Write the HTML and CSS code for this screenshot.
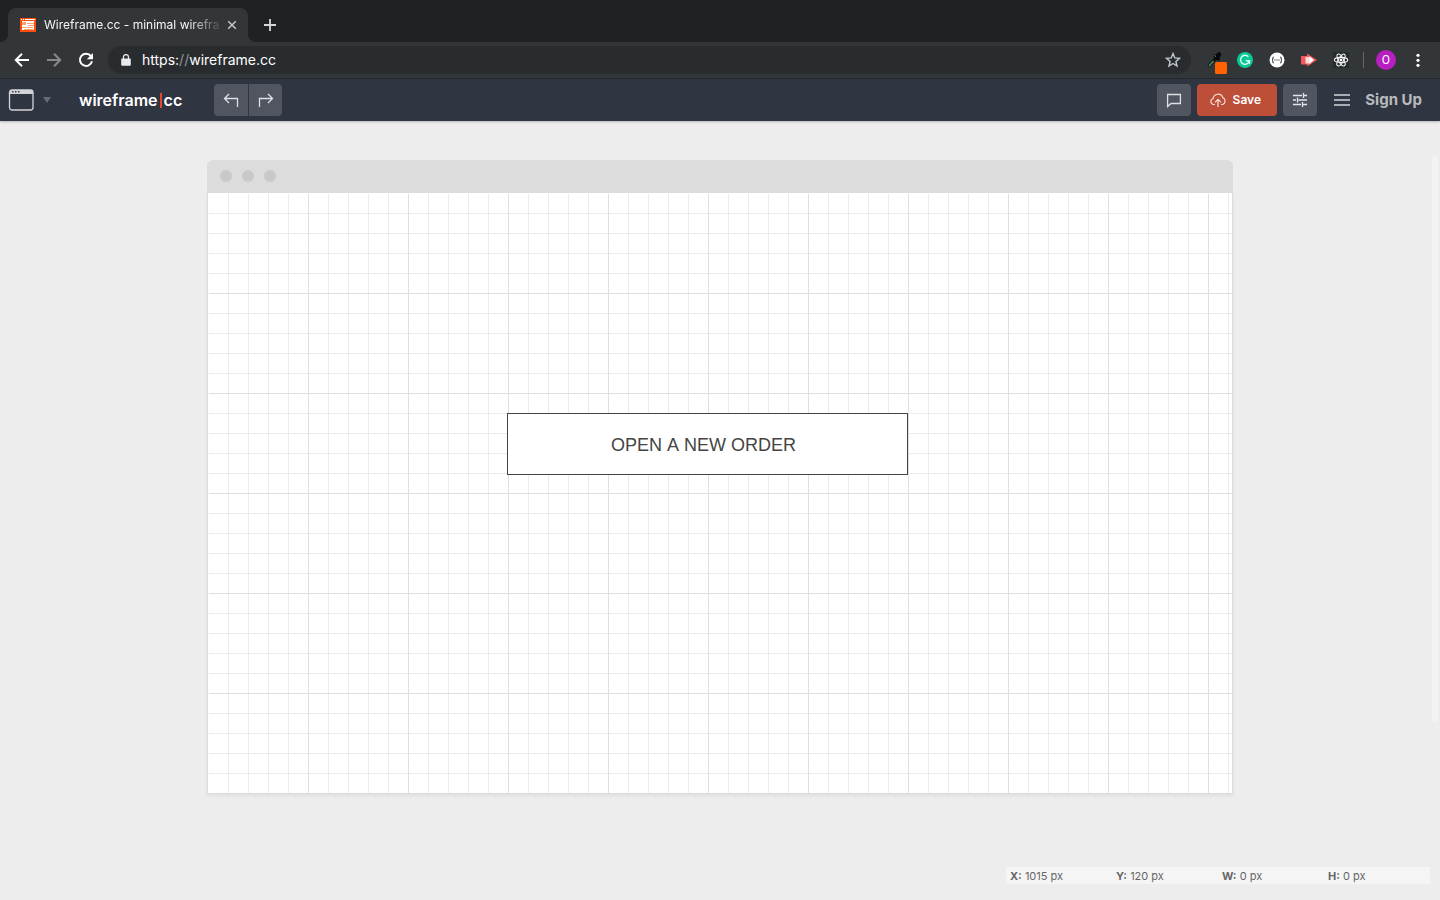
FILE: index.html
```html
<!DOCTYPE html>
<html lang="en">
<head>
<meta charset="utf-8">
<title>Wireframe.cc - minimal wireframing tool</title>
<link rel="stylesheet" href="styles.css">
</head>
<body>
<div class="tab-strip">
  <div class="tab">
    <svg class="favicon" width="16" height="14" viewBox="0 0 16 14"><path fill="#ff4d0c" d="M0 0h16v14H0z"/><path fill="#fff" d="M1 1h1v1H1zM3 1h1v1H3zM5 1h10v1H5zM2 3h12v9H2z"/><path fill="#ffa06f" d="M2 4h4v3H2zM7 5h7v1H7zM8 7h6v1H8zM2 9h4v1H2zM7 9h6v1H7zM4 11h9v1H4z"/></svg>
    <span class="tab-title">Wireframe.cc - minimal wirefra</span>
    <button class="plain tab-close" aria-label="Close tab"><svg width="10" height="10" viewBox="0 0 10 10"><path d="M1.200 1.200l7.600 7.600M8.800 1.200l-7.600 7.600" fill="none" stroke="#c5c8ca" stroke-width="1.500"/></svg></button>
  </div>
  <button class="plain new-tab" aria-label="New tab"><svg width="12" height="12" viewBox="0 0 12 12"><path d="M6 0v12M0 6h12" stroke="#d5d6d8" stroke-width="1.800"/></svg></button>
</div>

<div class="browser-bar">
  <div class="nav">
    <button class="plain" aria-label="Back"><svg width="16" height="16" viewBox="0 0 16 16"><path d="M15 8H2.200M8 1.800L1.800 8 8 14.200" fill="none" stroke="#fff" stroke-width="2"/></svg></button>
    <button class="plain" aria-label="Forward"><svg width="16" height="16" viewBox="0 0 16 16"><path d="M1 8h12.800M8 1.800L14.200 8 8 14.200" fill="none" stroke="#85898b" stroke-width="2"/></svg></button>
    <button class="plain" aria-label="Reload"><svg width="16" height="16" viewBox="0 0 16 16"><path d="M13 4.200A6.100 6.100 0 1 0 14 9.200" fill="none" stroke="#fff" stroke-width="2"/><path d="M15 1v6.200H8.800z" fill="#fff"/></svg></button>
  </div>
  <div class="address">
    <svg width="10" height="12" viewBox="0 0 10 12"><path d="M1 4.500h8a.8.8 0 0 1 .8.800v5.400a1 1 0 0 1-1 1H1.200a1 1 0 0 1-1-1V5.300a.8.8 0 0 1 .8-.8z" fill="#e8eaed"/><path d="M2.500 5V3.100a2.500 2.500 0 0 1 5 0V5" fill="none" stroke="#e8eaed" stroke-width="1.300"/></svg>
    <a class="url" href="#">https:<span class="dim">//</span>wireframe.cc</a>
    <button class="plain" aria-label="Bookmark"><svg width="16" height="16" viewBox="0 0 16 16"><path d="M8 1.600l1.800 4.300 4.700.4-3.600 3.100 1.100 4.600L8 11.500 4 14l1.100-4.600-3.600-3.100 4.700-.4z" fill="none" stroke="#c4c8cc" stroke-width="1.400"/></svg></button>
  </div>
  <div class="extensions">
    <button class="plain" aria-label="Color picker"><svg width="20" height="28" viewBox="0 0 20 28"><path d="M1.500 20.500L9 12" stroke="#0a130d" stroke-width="3"/><path d="M2 20l4.500-5" stroke="#4fa271" stroke-width="1.200"/><path d="M7 9l5.500 5" stroke="#08090a" stroke-width="2.400"/><path d="M9.500 11.500l2.500-3" stroke="#08090a" stroke-width="4.500" stroke-linecap="round"/><path d="M7.500 9.500l1.500 1" stroke="#999" stroke-width="1"/><rect x="8" y="16" width="12" height="12" rx="1.500" fill="#ff6200"/></svg></button>
    <button class="plain" aria-label="Grammarly"><svg width="16" height="16" viewBox="0 0 16 16"><circle cx="8" cy="8" r="8" fill="#08c796"/><path d="M11.400 4.800A4.500 4.500 0 1 0 12.400 9M8.800 8.700h3.700v3" fill="none" stroke="#dffff5" stroke-width="1.400"/></svg></button>
    <button class="plain" aria-label="JSON viewer"><svg width="16" height="16" viewBox="0 0 16 16"><circle cx="8" cy="8" r="7.500" fill="#fff"/><path d="M4.800 5c-1 0-1 .6-1 1.500S3.500 8 3 8c.5 0 .8.600.8 1.500s0 1.500 1 1.500M11.200 5c1 0 1 .6 1 1.500S12.500 8 13 8c-.5 0-.8.600-.8 1.500s0 1.500-1 1.500" fill="none" stroke="#333" stroke-width="1.100"/><path d="M5.400 8h1.200M7.400 8h1.200M9.400 8h1.200" stroke="#333" stroke-width="1.100"/></svg></button>
    <button class="plain" aria-label="Screen recorder"><svg width="16" height="16" viewBox="0 0 16 16"><path d="M0 4h9.500v8.500H0z" fill="#f4565b"/><path d="M6 1.500L16 8 6 14.500z" fill="#f4565b"/><path d="M4.500 5h5v6.500h-5z" fill="#ffd9da"/><path d="M8.500 4.200l4.500 3.800-4.500 3.800z" fill="#fff"/></svg></button>
    <button class="plain" aria-label="React tools"><svg width="16" height="16" viewBox="0 0 16 16"><path fill="#262b2d" d="M0 0h16v16H0z"/><g fill="none" stroke="#f2f2f2" stroke-width="1.100"><ellipse cx="8" cy="8" rx="6.700" ry="2.600"/><ellipse cx="8" cy="8" rx="6.700" ry="2.600" transform="rotate(60 8 8)"/><ellipse cx="8" cy="8" rx="6.700" ry="2.600" transform="rotate(120 8 8)"/></g><circle cx="8" cy="8" r="1.400" fill="#fff"/></svg></button>
  </div>
  <button class="plain avatar" aria-label="Profile">O</button>
  <button class="plain" aria-label="Browser menu"><svg width="16" height="16" viewBox="0 0 16 16" fill="#fff"><circle cx="8" cy="3.300" r="1.600"/><circle cx="8" cy="8.300" r="1.600"/><circle cx="8" cy="13.300" r="1.600"/></svg></button>
</div>

<header class="app-bar">
  <button class="plain device" aria-label="Choose device"><svg width="26" height="22" viewBox="0 0 26 22"><rect x="1.500" y="1" width="23.500" height="20" rx="2.500" fill="none" stroke="#d3d4d7" stroke-width="1.300"/><path d="M1.500 2.500A1.500 1.500 0 0 1 3 1h20.500A1.500 1.500 0 0 1 25 2.500V5H1.500z" fill="#d3d4d7"/><path d="M4 2h1.500v1.500H4zM7 2h1.500v1.500H7zM10 2h1.500v1.500H10z" fill="#353a47"/></svg><svg width="8" height="6" viewBox="0 0 8 6"><path d="M0 0h8L4 6z" fill="#676b76"/></svg></button>
  <a class="logo" href="#">wireframe<span class="caret"></span>cc</a>
  <div class="history">
    <button aria-label="Undo"><svg width="16" height="16" viewBox="0 0 16 16"><path d="M6 2L1.500 6.500 6 11M1.500 6.500H14.500V15" fill="none" stroke="#dee0e3" stroke-width="1.300"/></svg></button>
    <button aria-label="Redo"><svg width="16" height="16" viewBox="0 0 16 16"><path d="M10 2l4.500 4.500L10 11M14.500 6.500H1.500V15" fill="none" stroke="#dee0e3" stroke-width="1.300"/></svg></button>
  </div>
  <div class="actions">
    <button class="tool" aria-label="Comments"><svg width="16" height="16" viewBox="0 0 16 16"><path d="M1.600 2.500h12.800v9H5l-3.400 3z" fill="none" stroke="#dee0e3" stroke-width="1.300"/></svg></button>
    <button class="save"><svg width="16" height="16" viewBox="0 0 16 16"><path d="M5 12.500H3.700a3 3 0 0 1-.6-5.900 5 5 0 0 1 9.700-1 3.700 3.700 0 0 1-.3 6.900H11M8 15V7.500M5 10.300l3-3 3 3" fill="none" stroke="#f5dfda" stroke-width="1.200"/></svg>Save</button>
    <button class="tool" aria-label="Settings"><svg width="16" height="16" viewBox="0 0 16 16"><path d="M1 3.500h9M12 3.500h3M11.500 1v5M1 8h3M6.500 8H15M5.500 5.500v5M1 12.500h8M11 12.500h4M10.500 10v5" fill="none" stroke="#e4e5e8" stroke-width="1.300"/></svg></button>
    <button class="plain menu" aria-label="Menu"><svg width="16" height="14" viewBox="0 0 16 14"><path d="M0 2h16M0 7h16M0 12h16" stroke="#d2d4d6" stroke-width="1.500"/></svg></button>
    <a class="signup" href="#">Sign Up</a>
  </div>
</header>

<main class="workspace">
  <section class="mock-window">
    <div class="mock-title"><i></i><i></i><i></i></div>
    <div class="canvas">
      <div class="grid"></div>
      <button class="shape">OPEN A NEW ORDER</button>
    </div>
  </section>
  <div class="scroll-thumb"></div>
  <div class="status">
    <span><b>X:</b> 1015 px</span><span><b>Y:</b> 120 px</span><span><b>W:</b> 0 px</span><span><b>H:</b> 0 px</span>
  </div>
</main>
</body>
</html>
```
FILE: styles.css
```css
* { box-sizing: border-box; }
body {
  margin: 0;
  min-height: 100vh;
  display: flex;
  flex-direction: column;
  background: #ededed;
  font-family: Inter, Roboto, sans-serif;
}
svg { display: block; flex: none; }
a { color: inherit; text-decoration: none; }
button { font: inherit; border: 0; padding: 0; cursor: pointer; }
.plain { background: none; display: flex; align-items: center; }

.tab-strip { display: flex; height: 42px; padding: 8px 8px 0; background: #202125; }
.tab {
  position: relative;
  display: flex;
  align-items: center;
  width: 240px;
  padding: 0 11px 0 12px;
  border-radius: 8px 8px 0 0;
  background: #323638;
}
.tab::before, .tab::after {
  content: "";
  position: absolute;
  bottom: 0;
  width: 8px;
  height: 8px;
}
.tab::before { left: -8px; background: radial-gradient(circle at 0 0, #202125 8px, #323638 8px); }
.tab::after { right: -8px; background: radial-gradient(circle at 100% 0, #202125 8px, #323638 8px); }
.favicon { margin-right: 8px; }
.tab-title {
  flex: 1;
  min-width: 0;
  white-space: nowrap;
  font: 12px/16px Inter, sans-serif;
  color: #f4f5f5;
  -webkit-mask-image: linear-gradient(to right, #000 144px, transparent 180px);
  mask-image: linear-gradient(to right, #000 144px, transparent 180px);
}
.tab-close { margin-left: 8px; }
.new-tab { margin-left: 16px; }

.browser-bar {
  display: flex;
  align-items: center;
  height: 37px;
  padding: 0 14px;
  background: #323638;
  border-bottom: 1px solid #26292b;
}
.nav { display: flex; gap: 16px; }
.address {
  flex: 1;
  display: flex;
  align-items: center;
  height: 28px;
  margin-left: 14px;
  padding: 0 10px 0 13px;
  border-radius: 14px;
  background: #282c2e;
}
.url { flex: 1; margin-left: 11px; font: 14px/20px Inter, sans-serif; color: #fff; }
.dim { color: #91969a; }
.extensions {
  display: flex;
  align-items: center;
  gap: 16px;
  height: 16px;
  margin-left: 16px;
  padding-right: 14px;
  border-right: 1px solid #66696b;
}
.extensions button:first-child { margin-right: -6px; }
.avatar {
  width: 20px;
  height: 20px;
  justify-content: center;
  margin: 0 14px 0 12px;
  border-radius: 50%;
  background: #b71fc1;
  color: #fff;
  font: 12px/20px Roboto, sans-serif;
}

.app-bar {
  display: flex;
  align-items: center;
  height: 42px;
  padding: 0 18px 0 8px;
  background: #303542;
  box-shadow: 0 1px 2px rgba(0, 0, 0, .25);
  z-index: 1;
}
.device { gap: 9px; }
.logo { display: flex; align-items: center; margin-left: 28px; color: #fff; font-size: 16px; font-weight: 600; line-height: 20px; }
.caret { width: 2px; height: 15px; margin: 0 2px; background: #e0492f; }
.history { display: flex; gap: 1px; margin-left: 32px; }
.history button, .tool {
  display: flex;
  align-items: center;
  justify-content: center;
  width: 34px;
  height: 32px;
  background: #51555f;
}
.history button:first-child { border-radius: 4px 0 0 4px; }
.history button:last-child { width: 33px; border-radius: 0 4px 4px 0; }
.actions { display: flex; align-items: center; gap: 6px; margin-left: auto; }
.tool { border-radius: 4px; }
.save {
  display: flex;
  align-items: center;
  justify-content: center;
  gap: 7px;
  width: 80px;
  height: 32px;
  padding-right: 4px;
  border-radius: 4px;
  background: #bd4e38;
  color: #fff;
  font: 600 12px/16px Inter, sans-serif;
}
.menu { margin: 0 9px 0 11px; }
.signup { color: #b9bbbe; font: 700 15px/20px Inter, sans-serif; }

.workspace {
  position: relative;
  flex: 1;
  display: flex;
  flex-direction: column;
  align-items: center;
  padding: 39px 10px 16px;
}
.mock-window { width: 100%; max-width: 1026px; }
.mock-title { display: flex; gap: 10px; padding: 10px 13px 11px; border-radius: 6px 6px 0 0; background: #dcdcdc; }
.mock-title i { width: 12px; height: 12px; border-radius: 50%; background: #c9c9c9; }
.canvas {
  position: relative;
  padding: 1px 0 0 1px;
  background: #fff;
  border: solid #dcdcdc;
  border-width: 0 1px 1px;
  box-shadow: 0 2px 4px rgba(0, 0, 0, .06);
}
.grid {
  height: 599px;
  background-image:
    linear-gradient(#dfdfdf 1px, transparent 1px),
    linear-gradient(to right, #dfdfdf 1px, transparent 1px),
    linear-gradient(#ececec 1px, transparent 1px),
    linear-gradient(to right, #ececec 1px, transparent 1px);
  background-size: 100px 100px, 100px 100px, 20px 20px, 20px 20px;
  background-position: -1px -1px;
}
.shape {
  position: absolute;
  left: 299px;
  top: 220px;
  width: 401px;
  height: 62px;
  padding: 2px 8px 0 0;
  border: 1px solid #444;
  background: #fff;
  color: #444;
  font: 18px/22px "Liberation Sans", Arial, sans-serif;
  font-kerning: none;
}
.scroll-thumb {
  position: absolute;
  top: 35px;
  right: 2px;
  width: 6px;
  height: 566px;
  border-radius: 3px;
  background: #f3f3f3;
}
.status {
  display: grid;
  grid-template-columns: repeat(4, 1fr);
  align-self: flex-end;
  width: 424px;
  margin-top: auto;
  padding-top: 1px;
  background: #f5f5f5;
  color: #666;
  font: 11px/16px Inter, sans-serif;
}
.status span { padding-left: 4px; }
.status b { font-weight: 700; }
```
